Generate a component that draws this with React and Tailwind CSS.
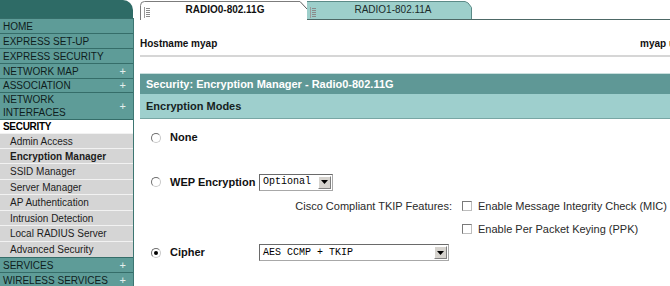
import React from 'react';

const menu = [
  { label: 'HOME', h: 'h-[15px]', type: 'top' },
  { label: 'EXPRESS SET-UP', h: 'h-[15px]', type: 'top' },
  { label: 'EXPRESS SECURITY', h: 'h-[15px]', type: 'top' },
  { label: 'NETWORK MAP', h: 'h-[15px]', type: 'top', plus: true },
  { label: 'ASSOCIATION', h: 'h-[14px]', type: 'top', plus: true },
  { label: 'NETWORK\nINTERFACES', h: 'h-[27px]', type: 'top', plus: true },
  { label: 'SECURITY', h: 'h-[14px]', type: 'open' },
  { label: 'Admin Access', h: 'h-[15px]', type: 'sub' },
  { label: 'Encryption Manager', h: 'h-[15px]', type: 'sub', active: true },
  { label: 'SSID Manager', h: 'h-[16px]', type: 'sub' },
  { label: 'Server Manager', h: 'h-[15px]', type: 'sub' },
  { label: 'AP Authentication', h: 'h-[16px]', type: 'sub' },
  { label: 'Intrusion Detection', h: 'h-[15px]', type: 'sub' },
  { label: 'Local RADIUS Server', h: 'h-[16px]', type: 'sub' },
  { label: 'Advanced Security', h: 'h-[16px]', type: 'sub' },
  { label: 'SERVICES', h: 'h-[15px]', type: 'top', plus: true },
  { label: 'WIRELESS SERVICES', h: 'h-[15px]', type: 'top', plus: true },
];

function MenuRow({ item }) {
  if (item.type === 'top') {
    return (
      <div className={`${item.h} flex shrink-0 items-center justify-between border-t border-[#356d69] bg-[#5e9c98] pl-[3px] pr-[7px] text-[10px] leading-[13px] text-[#0e1d1c]`}>
        <span className="whitespace-pre-line">{item.label}</span>
        {item.plus && <span className="text-[11px] text-[#e4eeed]">+</span>}
      </div>
    );
  }
  if (item.type === 'open') {
    return (
      <div className={`${item.h} flex shrink-0 items-center border-t border-[#356d69] bg-white pl-[3px] text-[10px] font-bold tracking-[-0.3px] text-black`}>
        {item.label}
      </div>
    );
  }
  return (
    <div className={`${item.h} flex shrink-0 items-center border-t border-[#f2f2f2] bg-[#d5d5d5] pl-[10px] text-[10px] text-[#1c1c1c] ${item.active ? 'font-bold' : ''}`}>
      {item.label}
    </div>
  );
}

function Grip({ x }) {
  return (
    <svg className="absolute top-[7px]" style={{ left: x }} width="6" height="11" viewBox="0 0 6 11">
      <path d="M0.5 0 V11" stroke="#9a9a9a" strokeWidth="1" />
      <path d="M2 1.5 H6 M2 3.5 H6 M2 5.5 H6 M2 7.5 H6 M2 9.5 H6" stroke="#8a8a8a" strokeWidth="1" />
    </svg>
  );
}

function Radio({ checked }) {
  return (
    <div className="flex h-[10px] w-[10px] shrink-0 items-center justify-center rounded-full border border-t-[#6f6f6f] border-l-[#6f6f6f] border-r-[#c9c9c9] border-b-[#c9c9c9] bg-white">
      {checked && <div className="h-[4px] w-[4px] rounded-full bg-black" />}
    </div>
  );
}

function Checkbox() {
  return (
    <div className="h-[10px] w-[10px] shrink-0 border border-t-[#7a7a7a] border-l-[#7a7a7a] border-r-[#bdbdbd] border-b-[#bdbdbd] bg-white" />
  );
}

function Select({ value, width }) {
  return (
    <div className={`${width} flex h-[17px] shrink-0 items-center border border-t-[#6a6a6a] border-l-[#6a6a6a] border-r-[#a8a8a8] border-b-[#a8a8a8] bg-white`}>
      <span className="flex-1 pl-[3px] font-['Liberation_Mono',monospace] text-[10px] leading-none text-black">{value}</span>
      <div className="mr-[1px] flex h-[13px] w-[13px] items-center justify-center border border-t-white border-l-white border-r-[#7f7f7f] border-b-[#7f7f7f] bg-[#d6d3ce]">
        <svg width="7" height="4" viewBox="0 0 7 4">
          <path d="M0 0 H7 L3.5 4 Z" fill="#000" />
        </svg>
      </div>
    </div>
  );
}

export default function App() {
  return (
    <div className="flex h-[286px] w-[670px] overflow-hidden bg-white font-['Liberation_Sans',Arial,sans-serif]">
      {/* left navigation */}
      <div className="flex w-[134px] shrink-0 flex-col">
        <div className="h-[18px] w-[133px] shrink-0 rounded-tr-[10px] bg-[#2e6b66]" />
        <div className="flex flex-1 flex-col border-r border-[#3d7672]">
          {menu.map((item) => (
            <MenuRow key={item.label} item={item} />
          ))}
        </div>
      </div>

      {/* main */}
      <div className="flex min-w-0 flex-1 flex-col pl-[6px]">
        {/* tabs */}
        <div className="flex h-[20px] shrink-0">
          <div className="relative h-[20px] w-[160px] shrink-0">
            <svg className="absolute inset-0" width="160" height="20" viewBox="0 0 160 20">
              <path d="M0.5 20 V5.5 Q0.5 1.5 4.5 1.5 H160" fill="#fff" stroke="#7c7c7c" strokeWidth="1" />
            </svg>
            <Grip x={4} />
            <div className="relative pl-[10px] pt-[4px] text-center text-[10px] font-bold leading-[12px] text-[#111]">RADIO0-802.11G</div>
          </div>
          <div className="relative h-[20px] w-[172px] shrink-0">
            <svg className="absolute inset-0" width="172" height="20" viewBox="0 0 172 20">
              <path d="M7 2 H165 Q168 2 171.5 7.5 V19 H7 Z" fill="#9dcfcb" />
              <path d="M0 1.5 L7 9" stroke="#5a5a5a" strokeWidth="1" fill="none" />
              <path d="M7 1.5 H165 Q168 1.5 171.5 7.5 V19" stroke="#5b8a87" strokeWidth="1" fill="none" />
              <path d="M7 19.5 H172" stroke="#4d6866" strokeWidth="1" />
            </svg>
            <Grip x={10} />
            <div className="relative pl-[14px] pt-[4px] text-center text-[10px] leading-[12px] text-[#1b2b2a]">RADIO1-802.11A</div>
          </div>
          <div className="flex-1 border-b border-[#4d6866]" />
        </div>

        {/* hostname */}
        <div className="mt-[16px] flex h-[14px] shrink-0 items-center whitespace-nowrap text-[10px] font-bold text-[#111]">
          <span className="w-[500px] shrink-0">Hostname myap</span>
          <span className="shrink-0">myap uptime is 2 hours, 14 minutes</span>
        </div>
        <div className="mt-[5px] h-[2px] w-[600px] shrink-0 bg-[#d6d6d6]" />

        {/* panel */}
        <div className="mt-[16px] w-[600px] shrink-0">
          <div className="flex h-[21px] items-center border-t border-[#c9dfdd] bg-[#5f9896] pl-[6px] text-[11px] font-bold text-white">
            Security: Encryption Manager - Radio0-802.11G
          </div>
          <div className="flex h-[25px] items-center border-b border-[#78a6a4] bg-[#9ecfcd] pl-[6px] text-[11px] font-bold text-[#16231f]">
            Encryption Modes
          </div>
        </div>

        <div className="flex flex-col text-[11px] text-[#2a2a2a]">
          <div className="mt-[10px] flex h-[17px] items-center pl-[11px]">
            <Radio />
            <span className="ml-[9px] font-bold text-[#111]">None</span>
          </div>

          <div className="mt-[27px] flex h-[18px] items-center pl-[11px]">
            <Radio />
            <span className="ml-[9px] w-[89px] font-bold text-[#111]">WEP Encryption</span>
            <Select value="Optional" width="w-[74px]" />
          </div>

          <div className="mt-[8px] flex h-[14px] items-center whitespace-nowrap">
            <span className="w-[312px] shrink-0 text-right">Cisco Compliant TKIP Features:</span>
            <div className="ml-[10px]"><Checkbox /></div>
            <span className="ml-[6px]">Enable Message Integrity Check (MIC)</span>
          </div>

          <div className="mt-[9px] flex h-[14px] items-center whitespace-nowrap">
            <div className="ml-[322px]"><Checkbox /></div>
            <span className="ml-[6px]">Enable Per Packet Keying (PPK)</span>
          </div>

          <div className="mt-[8px] flex h-[17px] items-center pl-[11px]">
            <Radio checked />
            <span className="ml-[9px] w-[89px] font-bold text-[#111]">Cipher</span>
            <Select value="AES CCMP + TKIP" width="w-[190px]" />
          </div>
        </div>
      </div>
    </div>
  );
}
